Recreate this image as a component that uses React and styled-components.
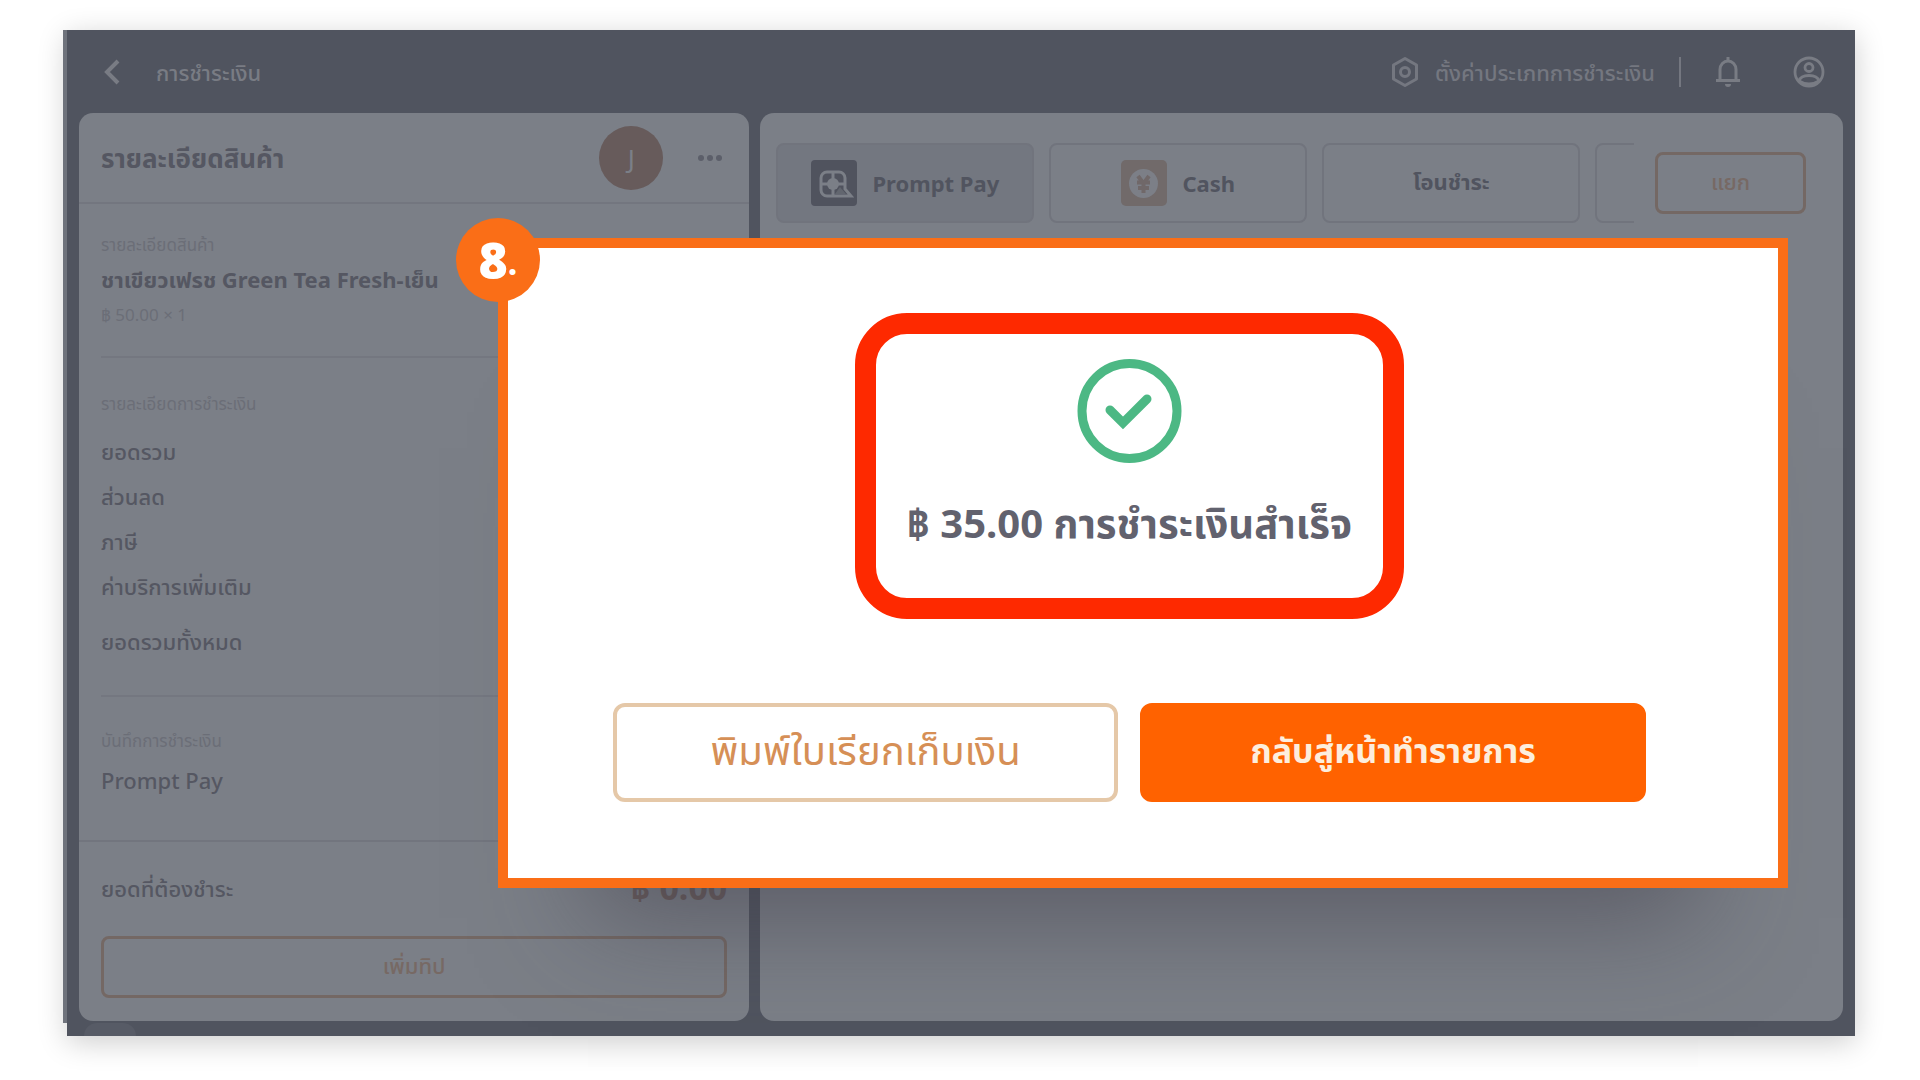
import React from "react";
import styled, { createGlobalStyle } from "styled-components";

const GlobalStyle = createGlobalStyle`
  *, *::before, *::after {
    box-sizing: border-box;
  }

  body {
    margin: 0;
    background: #fff;
    font-family: "Noto Sans", "Noto Sans Thai", sans-serif;
    color: #555762;
  }

  button {
    font-family: inherit;
    cursor: pointer;
  }
`;

const Page = styled.div`
  display: flex;
  min-height: 100vh;
  padding: 30px 65px 44px 67px;
`;

const Frame = styled.div`
  position: relative;
  flex: 1;
  display: flex;
  flex-direction: column;
  padding: 0 12px 15px;
  background: #50545f;
  box-shadow: 0 6px 28px rgba(0, 0, 0, 0.2);

  &::before {
    content: "";
    position: absolute;
    top: 0;
    bottom: 13px;
    left: -4px;
    width: 4px;
    background: #6f737c;
  }
`;

const TopBar = styled.header`
  display: flex;
  align-items: center;
  height: 83px;
  padding: 0 18px 0 25px;
  color: #797c84;
`;

const IconButton = styled.button`
  display: flex;
  padding: 0;
  border: 0;
  background: none;
  color: inherit;
`;

const PageTitle = styled.h1`
  flex: 1;
  margin: 0 0 0 36px;
  font-size: 22px;
  line-height: 32px;
  font-weight: 500;
`;

const SettingsLink = styled.a`
  display: flex;
  align-items: center;
  gap: 16px;
  font-size: 22px;
  line-height: 32px;
  font-weight: 500;
  color: #747780;
  text-decoration: none;
`;

const Separator = styled.span`
  width: 2px;
  height: 30px;
  margin: 0 34px 0 24px;
  background: #747780;
`;

const BarActions = styled.div`
  display: flex;
  align-items: center;
  gap: 52px;
`;

const Columns = styled.main`
  flex: 1;
  display: grid;
  grid-template-columns: 38% 1fr;
  gap: 11px;
`;

const Panel = styled.section`
  display: flex;
  flex-direction: column;
  min-width: 0;
  border-radius: 14px;
  background: #7b7f87;
`;

const PanelHead = styled.div`
  display: flex;
  align-items: center;
  height: 91px;
  padding: 0 26px 0 22px;
  border-bottom: 2px solid #73767f;
`;

const PanelTitle = styled.h2`
  flex: 1;
  margin: 0;
  font-size: 26px;
  line-height: 36px;
  font-weight: 700;
`;

const Avatar = styled.span`
  display: grid;
  place-items: center;
  width: 64px;
  height: 64px;
  margin-right: 34px;
  border-radius: 50%;
  background: #675b5b;
  color: #7b7f87;
  font-size: 26px;
`;

const Block = styled.div`
  flex: ${(props) => (props.$grow ? 1 : "none")};
  margin: 0 22px;
  padding: ${(props) => props.$pad};
  border-bottom: ${(props) => (props.$grow ? 0 : "2px solid #747780")};
`;

const Caption = styled.p`
  margin: 0;
  font-size: 17px;
  line-height: 32px;
  color: #6b6e77;
`;

const ItemName = styled.p`
  margin: 0;
  font-size: 22px;
  line-height: 36px;
  font-weight: 700;
`;

const ItemPrice = styled(Caption)`
  line-height: 36px;
`;

const Row = styled.div`
  display: flex;
  align-items: center;
  justify-content: space-between;
  height: 45px;
  margin-top: ${(props) => (props.$spaced ? "10px" : 0)};
  font-size: 22px;
  font-weight: 500;
`;

const PanelFoot = styled.div`
  padding: 25px 22px 23px;
  border-top: 2px solid #72757e;
`;

const Due = styled.strong`
  font-size: 34px;
  font-weight: 700;
  color: #695c5c;
`;

const OutlineButton = styled.button`
  width: ${(props) => props.$width || "100%"};
  height: 62px;
  margin-top: ${(props) => (props.$width ? 0 : "24px")};
  border: 3px solid #746864;
  border-radius: 8px;
  background: none;
  color: #776964;
  font-size: 22px;
  font-weight: 500;
`;

const MethodBar = styled.div`
  display: flex;
  align-items: center;
  gap: 21px;
  padding: 30px 37px 0 16px;
`;

const Methods = styled.div`
  flex: 1;
  display: flex;
  gap: 15px;
  min-width: 0;
  overflow: hidden;
`;

const Method = styled.button`
  flex: none;
  display: flex;
  align-items: center;
  justify-content: center;
  gap: 15px;
  width: 258px;
  height: 80px;
  border: 2px solid #71747d;
  border-radius: 8px;
  background: ${(props) => (props.$active ? "#737780" : "none")};
  color: #51545f;
  font-size: 22px;
  font-weight: 700;
`;

const Dialog = styled.div`
  position: absolute;
  top: 208px;
  left: 24.1%;
  right: 67px;
  display: flex;
  flex-direction: column;
  align-items: center;
  padding: 65px 132px 76px 105px;
  border: 10px solid #fa6e17;
  background: #fff;
  box-shadow: 0 120px 100px -90px rgba(60, 58, 70, 0.5);
`;

const StepBadge = styled.span`
  position: absolute;
  top: -30px;
  left: -52px;
  display: flex;
  align-items: center;
  justify-content: center;
  width: 84px;
  height: 84px;
  border-radius: 50%;
  background: #fa6e17;
  color: #fff;
  font: 800 50px/84px "Open Sans", sans-serif;
`;

const Dot = styled.span`
  font-family: Lato, sans-serif;
  font-weight: 700;
  font-size: 40px;
`;

const Result = styled.div`
  display: flex;
  flex-direction: column;
  align-items: center;
  padding: 24px 31px 45px;
  border: 21px solid #fe2900;
  border-radius: 52px;
`;

const ResultText = styled.p`
  margin: 29px 0 0;
  font-size: 40px;
  line-height: 60px;
  font-weight: 700;
  color: #62626e;
  white-space: nowrap;
`;

const DialogActions = styled.div`
  display: grid;
  grid-template-columns: 1fr 1fr;
  gap: 22px;
  width: 100%;
  margin-top: 84px;
`;

const DialogButton = styled.button`
  height: 99px;
  border: 4px solid ${(props) => (props.$primary ? "#ff6200" : "#e5c8a8")};
  border-radius: 12px;
  background: ${(props) => (props.$primary ? "#ff6200" : "#fff")};
  color: ${(props) => (props.$primary ? "#fdeedd" : "#d68f56")};
  font-size: ${(props) => (props.$primary ? "34px" : "40px")};
  font-weight: ${(props) => (props.$primary ? 700 : 400)};
`;

const Bubble = styled.span`
  position: absolute;
  bottom: 0;
  left: 17px;
  width: 52px;
  height: 13px;
  border-radius: 26px 26px 0 0;
  background: #575b66;
`;

function BackIcon() {
  return (
    <svg width="16" height="26" viewBox="0 0 16 26" fill="none" stroke="currentColor" strokeWidth="4">
      <path d="M14 2 3 13l11 11" />
    </svg>
  );
}

function HexIcon() {
  return (
    <svg width="28" height="32" viewBox="0 0 28 32" fill="none" stroke="currentColor" strokeWidth="3">
      <path d="M14 2.5 25.5 9v14L14 29.5 2.5 23V9z" strokeLinejoin="round" />
      <circle cx="14" cy="16" r="4.5" />
    </svg>
  );
}

function BellIcon() {
  return (
    <svg width="26" height="31" viewBox="0 0 26 31" fill="none" stroke="currentColor" strokeWidth="3">
      <path d="M5 24V13.500a8 8.500 0 0 1 16 0V24" />
      <path d="M1 24.500h24" />
      <path d="M13 1v4" />
      <path d="M10 28h6a3 3 0 0 1-6 0z" fill="currentColor" stroke="none" />
    </svg>
  );
}

function UserIcon() {
  return (
    <svg width="32" height="32" viewBox="0 0 32 32" fill="none" stroke="currentColor" strokeWidth="2.800">
      <circle cx="16" cy="16" r="14" />
      <circle cx="16" cy="11.500" r="4" />
      <path d="M6 25c1-3.500 5-5.500 10-5.500s9 2 10 5.500c-6 4-14 4-20 0z" />
    </svg>
  );
}

function MoreIcon() {
  return (
    <svg width="26" height="8" viewBox="0 0 26 8" fill="#5c5f6a">
      <circle cx="4" cy="4" r="3" />
      <circle cx="13" cy="4" r="3" />
      <circle cx="22" cy="4" r="3" />
    </svg>
  );
}

function PromptPayIcon() {
  return (
    <svg width="46" height="46" viewBox="0 0 46 46">
      <rect width="46" height="46" rx="4" fill="#50535e" />
      <path
        d="M16 12h12a6 6 0 0 1 6 6v11l6 7H16a6 6 0 0 1-6-6V18a6 6 0 0 1 6-6z"
        fill="none"
        stroke="#7b7f87"
        strokeWidth="3"
      />
      <path d="M22 12v24M10 24h24" stroke="#7b7f87" strokeWidth="3" />
      <circle cx="22" cy="24" r="6" fill="#7b7f87" />
      <path d="M24 34 29 27l6 7z" fill="#62666f" />
    </svg>
  );
}

function CashIcon() {
  return (
    <svg width="46" height="46" viewBox="0 0 46 46">
      <rect width="46" height="46" rx="5" fill="#716a6a" />
      <circle cx="22.500" cy="23.500" r="14.500" fill="#7c7f87" />
      <path
        d="m17 16 5.500 7.500L28 16M22.500 23v10M16 22.500h13M17 28h11"
        fill="none"
        stroke="#706869"
        strokeWidth="4"
      />
    </svg>
  );
}

function SuccessIcon() {
  return (
    <svg width="105" height="106" viewBox="0 0 105 106" fill="none" stroke="#4cb884">
      <circle cx="52.500" cy="53" r="47.500" strokeWidth="9" />
      <path d="m33 52 13 13 24-24" strokeWidth="9" strokeLinecap="round" />
    </svg>
  );
}

const charges = ["ยอดรวม", "ส่วนลด", "ภาษี", "ค่าบริการเพิ่มเติม"];

function OrderPanel() {
  return (
    <Panel>
      <PanelHead>
        <PanelTitle>รายละเอียดสินค้า</PanelTitle>
        <Avatar>J</Avatar>
        <IconButton aria-label="more">
          <MoreIcon />
        </IconButton>
      </PanelHead>
      <Block $pad="25px 0 23px">
        <Caption>รายละเอียดสินค้า</Caption>
        <ItemName>ชาเขียวเฟรช Green Tea Fresh-เย็น</ItemName>
        <ItemPrice>฿ 50.00 × 1</ItemPrice>
      </Block>
      <Block $pad="30px 0 30px">
        <Caption>รายละเอียดการชำระเงิน</Caption>
        {charges.map((name, i) => (
          <Row key={name} $spaced={i === 0}>
            {name}
          </Row>
        ))}
        <Row $spaced>ยอดรวมทั้งหมด</Row>
      </Block>
      <Block $grow $pad="28px 0 0">
        <Caption>บันทึกการชำระเงิน</Caption>
        <Row>Prompt Pay</Row>
      </Block>
      <PanelFoot>
        <Row>
          ยอดที่ต้องชำระ
          <Due>฿ 0.00</Due>
        </Row>
        <OutlineButton>เพิ่มทิป</OutlineButton>
      </PanelFoot>
    </Panel>
  );
}

function PaymentPanel() {
  return (
    <Panel>
      <MethodBar>
        <Methods>
          <Method $active>
            <PromptPayIcon />
            Prompt Pay
          </Method>
          <Method>
            <CashIcon />
            Cash
          </Method>
          <Method>โอนชำระ</Method>
          <Method aria-label="other" />
        </Methods>
        <OutlineButton $width="151px">แยก</OutlineButton>
      </MethodBar>
    </Panel>
  );
}

function SuccessDialog() {
  return (
    <Dialog role="dialog">
      <StepBadge>
        8<Dot>.</Dot>
      </StepBadge>
      <Result>
        <SuccessIcon />
        <ResultText>฿ 35.00 การชำระเงินสำเร็จ</ResultText>
      </Result>
      <DialogActions>
        <DialogButton>พิมพ์ใบเรียกเก็บเงิน</DialogButton>
        <DialogButton $primary>กลับสู่หน้าทำรายการ</DialogButton>
      </DialogActions>
    </Dialog>
  );
}

function App() {
  return (
    <Page>
      <GlobalStyle />
      <Frame>
        <TopBar>
          <IconButton aria-label="back">
            <BackIcon />
          </IconButton>
          <PageTitle>การชำระเงิน</PageTitle>
          <SettingsLink href="#settings">
            <HexIcon />
            ตั้งค่าประเภทการชำระเงิน
          </SettingsLink>
          <Separator />
          <BarActions>
            <IconButton aria-label="notifications">
              <BellIcon />
            </IconButton>
            <IconButton aria-label="account">
              <UserIcon />
            </IconButton>
          </BarActions>
        </TopBar>
        <Columns>
          <OrderPanel />
          <PaymentPanel />
        </Columns>
        <Bubble />
        <SuccessDialog />
      </Frame>
    </Page>
  );
}

export default App;
